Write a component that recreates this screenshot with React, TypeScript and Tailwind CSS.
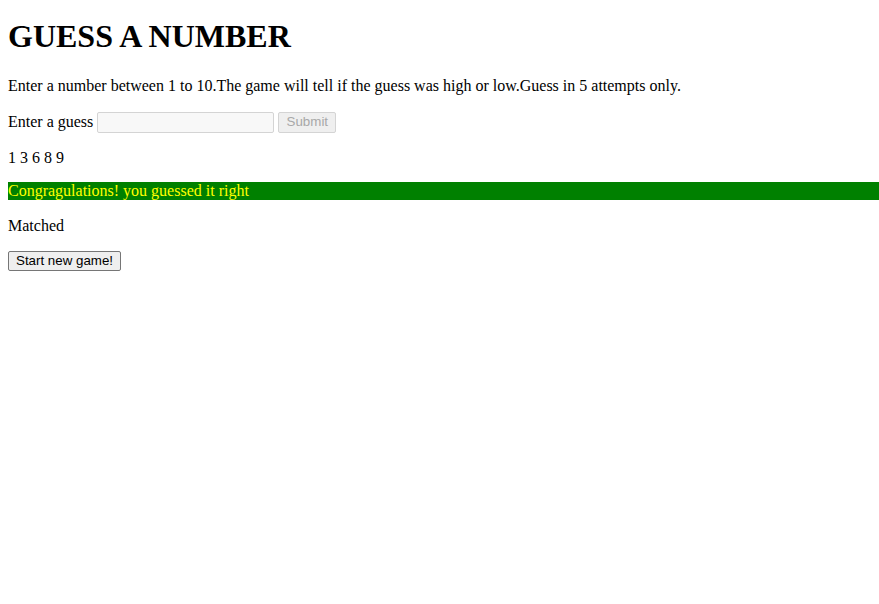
import React from "react";

export default function App() {
  return (
    <div className="min-h-screen bg-white pl-2 text-black" style={{ fontFamily: '"Liberation Serif", "Times New Roman", serif' }}>
      <div className="h-px" />
      <h1 className="mt-[17px] mb-[22px] text-[32px] font-bold leading-[37px]">GUESS A NUMBER</h1>
      <p className="text-[16px] leading-[18px]">
        Enter a number between 1 to 10.The game will tell if the guess was high or low.Guess in 5 attempts only.
      </p>
      <div className="mt-[16px] flex h-[22px] items-center text-[16px]">
        <span>Enter a guess</span>
        <input
          disabled
          className="ml-[4px] h-[21px] w-[177px] rounded-[2px] border border-[#d4d4d4] bg-[#f8f8f8] px-[2px]"
        />
        <button
          disabled
          className="ml-[4px] h-[21px] w-[58px] rounded-[2px] border border-[#d4d4d4] bg-[#efefef] text-[13.33px] leading-none text-[#a8a8a8]"
          style={{ fontFamily: '"Liberation Sans", Arial, sans-serif' }}
        >
          Submit
        </button>
      </div>
      <p className="mt-[16px] text-[16px] leading-[18px]">1 3 6 8 9</p>
      <p className="mt-[15px] h-[18px] bg-[#008000] text-[16px] leading-[18px] text-[#ffff00]">
        Congragulations! you guessed it right
      </p>
      <p className="mt-[17px] text-[16px] leading-[18px]">Matched</p>
      <button
        className="mt-[16px] h-[20px] rounded-[2px] border border-[#767676] bg-[#efefef] px-[7px] text-[13.33px] leading-none text-black"
        style={{ fontFamily: '"Liberation Sans", Arial, sans-serif' }}
      >
        Start new game!
      </button>
    </div>
  );
}
